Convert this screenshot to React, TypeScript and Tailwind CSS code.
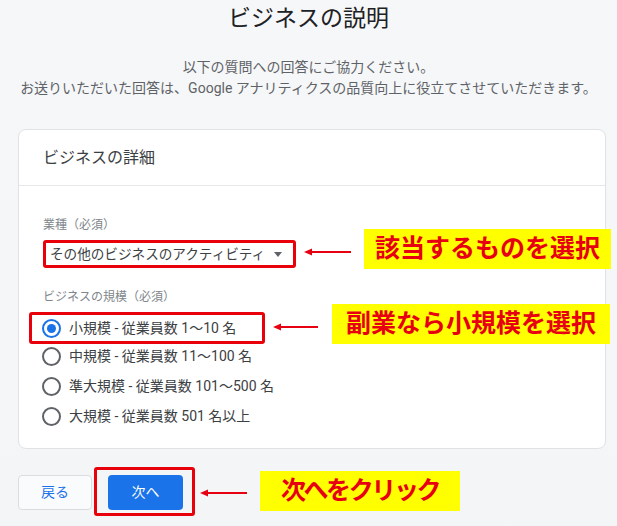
import React from "react";

const font = "font-['Roboto','Noto_Sans_CJK_JP',sans-serif]";

function LeftArrow({ width }: { width: number }) {
  return (
    <svg width={width} height="10" viewBox={`0 0 ${width} 10`} className="shrink-0">
      <line x1="4" y1="5" x2={width} y2="5" stroke="#e60012" strokeWidth="2" />
      <path d="M0 5 L8 1.5 L8 8.5 Z" fill="#e60012" />
    </svg>
  );
}

function Callout({
  children,
  className,
}: {
  children: React.ReactNode;
  className: string;
}) {
  return (
    <div
      className={`flex h-[40px] shrink-0 items-center justify-center whitespace-nowrap bg-[#ffff00] font-bold text-[#e60012] ${className}`}
    >
      {children}
    </div>
  );
}

function Radio({ checked }: { checked?: boolean }) {
  return (
    <span
      className={`flex h-[19px] w-[19px] shrink-0 items-center justify-center rounded-full border-2 ${
        checked ? "border-[#1a73e8]" : "border-[#5f6368]"
      }`}
    >
      {checked && <span className="h-[9px] w-[9px] rounded-full bg-[#1a73e8]" />}
    </span>
  );
}

const sizes = [
  "中規模 - 従業員数 11〜100 名",
  "準大規模 - 従業員数 101〜500 名",
  "大規模 - 従業員数 501 名以上",
];

export default function App() {
  return (
    <div
      className={`${font} h-[526px] w-[617px] overflow-hidden bg-gradient-to-b from-[#f6f7f8] to-[#f4f5f6] text-[#3c4043]`}
    >
      <h1 className="pt-[5px] text-center text-[23px] leading-[28px] font-normal text-[#202124]">
        ビジネスの説明
      </h1>
      <div className="mt-[24px] text-center text-[14px] leading-[21px] text-[#5f6368]">
        <p>以下の質問への回答にご協力ください。</p>
        <p className="whitespace-nowrap">
          お送りいただいた回答は、Google アナリティクスの品質向上に役立てさせていただきます。
        </p>
      </div>

      <section className="ml-[18px] mt-[30px] h-[320px] w-[588px] rounded-lg border border-[#e0e2e5] bg-white">
        <div className="flex h-[56px] items-center border-b border-[#e6e8ea] px-[24px] text-[16px] text-[#3c4043]">
          ビジネスの詳細
        </div>

        <div className="pl-[24px] pt-[30px]">
          <div className="text-[12px] leading-[18px] text-[#80868b]">業種（必須）</div>
          <div className="-mt-[5px] flex items-start">
            <div className="mt-[11px] flex h-[28px] w-[253px] shrink-0 items-center whitespace-nowrap rounded-[3px] border-[3px] border-[#e8000b] pl-[4px] text-[13.6px] text-[#3c4043]">
              <span>その他のビジネスのアクティビティ</span>
              <span className="ml-[9px] h-0 w-0 border-x-[4px] border-t-[5px] border-x-transparent border-t-[#5f6368]" />
            </div>
            <div className="ml-[8px] mt-[18px]">
              <LeftArrow width={47} />
            </div>
            <Callout className="ml-[13px] w-[247px] text-[25px]">該当するものを選択</Callout>
          </div>

          <div className="mt-[19px] text-[12px] leading-[18px] text-[#80868b]">
            ビジネスの規模（必須）
          </div>
          <div className="-mt-[2px] flex items-start">
            <div className="-ml-[14px] mt-[8px] flex h-[32px] w-[236px] shrink-0 items-center gap-[8px] whitespace-nowrap rounded-[3px] border-[3px] border-[#e8000b] pl-[10px] text-[14px]">
              <Radio checked />
              <span>小規模 - 従業員数 1〜10 名</span>
            </div>
            <div className="ml-[8px] mt-[18px]">
              <LeftArrow width={45} />
            </div>
            <Callout className="ml-[14px] w-[278px] text-[25px]">副業なら小規模を選択</Callout>
          </div>
          <div className="-mt-[3px] -ml-[1px]">
            {sizes.map((s) => (
              <div key={s} className="flex h-[30px] items-center gap-[8px] text-[14px]">
                <Radio />
                <span>{s}</span>
              </div>
            ))}
          </div>
        </div>
      </section>

      <div className="ml-[18px] mt-[18px] flex items-start">
        <button className="mt-[8px] h-[35px] w-[74px] rounded-[4px] border border-[#dadce0] bg-[#fafbfc] text-[14px] text-[#1a73e8]">
          戻る
        </button>
        <div className="ml-[2px] flex rounded-[3px] border-[3px] border-[#e8000b] pb-[3px] pl-[11px] pr-[9px] pt-[5px]">
          <button className="h-[35px] w-[75px] rounded-[4px] bg-[#1a73e8] text-[14px] text-white">
            次へ
          </button>
        </div>
        <div className="ml-[5px] mt-[21px]">
          <LeftArrow width={47} />
        </div>
        <Callout className="ml-[13px] mt-[4px] w-[200px] text-[25px] tracking-[-2.4px]">
          次へをクリック
        </Callout>
      </div>
    </div>
  );
}
